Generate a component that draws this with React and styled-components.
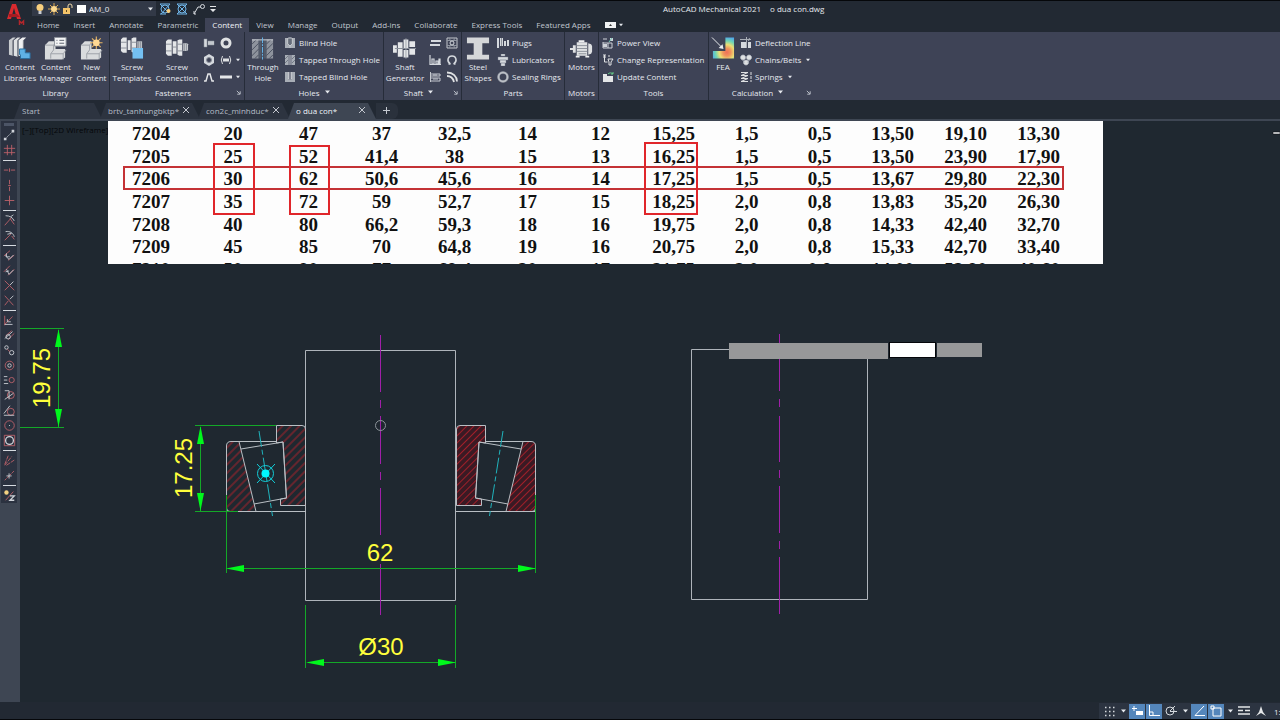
import React, { useState } from "react";
import styled, { createGlobalStyle } from "styled-components";

const GlobalStyle = createGlobalStyle`
    * {
        box-sizing: border-box;
    }

    body {
        margin: 0;
        background: #1f2830;
    }

    button, input, select {
        margin: 0;
        padding: 0;
        border: 0;
        background: none;
        color: inherit;
        font: inherit;
    }

    svg {
        display: block;
        flex: none;
    }
`

const Page = styled.div`
    display: flex;
    flex-direction: column;
    min-height: 100vh;
    overflow: hidden;
    font-family: "Open Sans", "Noto Sans", sans-serif;
    font-size: 8px;
    line-height: 11px;
    color: #e6e9ef;
`

const Header = styled.header`
    display: flex;
    height: 32px;
    background: #222933;
    border-top: 1px solid #05070a;
`

const Logo = styled.div`
    width: 32px;
    padding: 2px 0 0 6px;
`

const HeaderRows = styled.div`
    flex: 1;
    min-width: 0;
`

const TitleRow = styled.div`
    display: flex;
    align-items: center;
    height: 17px;
    padding-bottom: 2px;
`

const LayerBox = styled.label`
    display: flex;
    align-items: center;
    gap: 2px;
    width: 124px;
    height: 15px;
    padding: 0 3px 0 2px;
    background: #323947;

    select {
        flex: 1;
        min-width: 0;
        padding-left: 1px;
        appearance: none;
    }
`

const QuickTools = styled.div`
    display: flex;
    align-items: center;
    gap: 5px;
    width: 507px;
    padding-left: 3px;
`

const Title = styled.div`
    display: flex;
    gap: 9px;
    white-space: pre;
`

const TabRow = styled.nav`
    display: flex;
    height: 14px;
    margin-left: -2px;
`

const Tab = styled.button`
    padding: 0 7px 2px;
    color: ${props => props.$active ? "#f0f3f8" : "#c0c6cf"};
    background: ${props => props.$active ? "#3e4356" : "transparent"};
    white-space: nowrap;
`

const TabToggle = styled.button`
    display: flex;
    align-items: center;
    gap: 3px;
    padding: 0 0 1px 7px;
`

const Ribbon = styled.div`
    display: flex;
    height: 68px;
    padding-left: 2px;
    background: #3e4356;
`

const Panel = styled.section`
    display: flex;
    flex-direction: column;
    flex: none;
    width: ${props => props.$width}px;
    border-right: 1px solid ${props => props.$last ? "transparent" : "#262c39"};
`

const PanelBody = styled.div`
    display: flex;
    height: 54px;
    padding-top: 2px;
`

const PanelTitle = styled.div`
    display: flex;
    align-items: center;
    height: 14px;
    padding-bottom: 2px;

    h2 {
        display: flex;
        align-items: center;
        justify-content: center;
        gap: 5px;
        flex: 1;
        margin: 0;
        font-size: 8px;
        font-weight: 400;
    }

    button {
        width: 8px;
    }
`

const BigButton = styled.button`
    display: flex;
    flex-direction: column;
    align-items: center;
    flex: none;
    width: ${props => props.$width}px;
    height: 50px;
    padding-top: 2px;
    white-space: nowrap;
`

const ButtonList = styled.div`
    display: flex;
    flex-direction: column;
    padding-left: 3px;
`

const ListButton = styled.button`
    display: flex;
    align-items: center;
    gap: 3px;
    height: 17px;
    white-space: nowrap;

    span + svg {
        margin-left: 2px;
    }
`

const IconGrid = styled.div`
    display: grid;
    grid-template-columns: 17px 17px ${props => props.$menus ? "8px" : ""};
    grid-auto-rows: 17px;

    button {
        display: flex;
        align-items: center;
        justify-content: center;
    }
`

const FileTabs = styled.nav`
    display: flex;
    align-items: flex-end;
    height: 21px;
    padding-left: 14px;
    background: #222933;
    border-bottom: 2px solid #3e4653;
`

const FileTab = styled.div`
    display: flex;
    align-items: center;
    justify-content: space-between;
    width: ${props => props.$width}px;
    height: 16px;
    margin-right: -2px;
    padding: 0 11px 2px 8px;
    clip-path: polygon(0 100%, 6px 0, calc(100% - 8px) 0, 100% 100%);
    background: ${props => props.$active ? "#3e4653" : "#2d3440"};
    color: ${props => props.$active ? "#f0f3f8" : "#b6bcc6"};
`

const AddTab = styled.button`
    width: 22px;
    height: 16px;
    padding: 0 0 2px 7px;
    margin-left: 2px;
    background: #2a313c;
    border-radius: 0 6px 6px 0;
`

const Workspace = styled.div`
    display: flex;
    flex: 1;
`

const SideBar = styled.aside`
    width: 20px;
    flex: none;
    background: #3e4653;
`

const SnapBar = styled.div`
    display: flex;
    flex-direction: column;
    align-items: center;
    width: 16px;
    margin-left: 1px;
    padding: 2px 0 0;
    background: #2b3240;

    button {
        display: flex;
        align-items: center;
        justify-content: center;
        width: 16px;
        height: 15px;
    }
`

const Grip = styled.div`
    width: 10px;
    height: 3px;
    margin-bottom: 2px;
    background: #4c5566;
`

const Divider = styled.div`
    width: 13px;
    height: 1px;
    margin: 2px 0;
    background: #d5dae0;
`

const Canvas = styled.main`
    position: relative;
    flex: 1;
    min-width: 0;
    background: #1f2830;
`

const ViewLabel = styled.div`
    position: absolute;
    top: 3px;
    left: 2px;
    color: #05070a;
    white-space: nowrap;
`

const Scan = styled.div`
    position: relative;
    width: 995px;
    height: 143px;
    margin-left: 88px;
    padding-top: 2px;
    background: #fdfdfd;
    overflow: hidden;
`

const BearingTable = styled.table`
    table-layout: fixed;
    width: 967px;
    height: 158px;
    border-collapse: collapse;
    font-family: "Liberation Serif", serif;
    font-size: 19px;
    line-height: 20px;
    font-weight: 700;
    color: #111;

    td {
        width: 73px;
        padding: 0;
        text-align: center;
    }
    td:nth-child(1) {
        width: 86px;
    }
    td:nth-child(2) {
        width: 78px;
    }
`

const Drawing = styled.svg`
    position: absolute;
    inset: 0;
    width: 100%;
    height: 100%;
    font-family: "Liberation Sans", sans-serif;
    font-size: 24px;
`

const DynamicInput = styled.div`
    position: absolute;
    top: 221px;
    left: 709px;
    display: flex;
    gap: 1px;
`

const Prompt = styled.div`
    width: 159px;
    height: 16px;
    margin-top: 1px;
    background: #979899;
`

const ValueBox = styled.input`
    width: ${props => props.$active ? 47 : 45}px;
    height: ${props => props.$active ? 16 : 14}px;
    margin-top: ${props => props.$active ? 0 : 1}px;
    border: ${props => props.$active ? "1px solid #05070a" : "0"};
    background: ${props => props.$active ? "#fff" : "#979899"};
    outline: 0;
`

const StatusBar = styled.footer`
    display: flex;
    justify-content: flex-end;
    height: 18px;
    background: #222933;
    border-bottom: 1px solid #05070a;
`

const StatusTools = styled.div`
    display: flex;
    align-items: center;
    gap: 1px;
    width: 181px;
    margin-top: 1px;
    padding-left: 2px;
    background: #2c3441;
    overflow: hidden;
    white-space: nowrap;

    span {
        padding-left: 4px;
    }
`

const StatusButton = styled.button`
    display: flex;
    align-items: center;
    justify-content: center;
    flex: none;
    width: ${props => props.$narrow ? 10 : 16}px;
    height: 15px;
    background: ${props => props.$on ? "#5486bb" : "transparent"};
`

const Down = ({ size = 5 }) => (
    <svg width={size} height="4" viewBox="0 0 5 4"><path d="M0 .5h5L2.5 3.5z" fill="#e6e9ee" /></svg>
)

const Launcher = () => (
    <svg width="5" height="5" viewBox="0 0 6 6" fill="none" stroke="#cfd4dc"><path d="M1 1l3.5 3.5M5 1.5V5H1.5" /></svg>
)

// 24px ribbon icons
const big = {
    libraries: <>
        <path d="M1 4l4-3 3 0-3 3v16l-4-1z" fill="#c9ccd0" />
        <path d="M6 4l4-3 3 0-3 3v17l-4-1z" fill="#dfe1e3" />
        <path d="M11 4l4-3 4 0-3 3v17l-5-1z" fill="#f0f1f2" />
        <path d="M5 4v16M10 4v17M16 4v10" stroke="#7d828b" />
        <path d="M12 13h6v4h5v6H13v-4h-1z" fill="#5fb2e6" stroke="#2c6f9f" />
    </>,
    manager: <>
        <path d="M1 9l4-4h7v8h10v9l-3 2H1z" fill="#d9dbdd" />
        <path d="M1 9h9l3-4M10 9v5l-3 4h13v6M7 18v5M20 18l3-4" stroke="#9da1a8" fill="none" />
        <path d="M11 1h12v9H11z" fill="#f4f5f6" stroke="#8d929b" />
        <path d="M13 4h1M16 4h5M13 7h1M16 7h5" stroke="#555c68" />
    </>,
    newContent: <>
        <path d="M1 9l4-4h7v8h10v9l-3 2H1z" fill="#d9dbdd" />
        <path d="M1 9h9l3-4M10 9v5l-3 4h13v6M7 18v5M20 18l3-4" stroke="#9da1a8" fill="none" />
        <path d="M17 0v13M10.500 6.500h13M12.500 2l9 9M21.500 2l-9 9" stroke="#e6b566" strokeWidth="1.200" />
        <circle cx="17" cy="6.500" r="3.500" fill="#ffd894" />
    </>,
    templates: <>
        <path d="M1 3l2-2h4v16H3l-2-2zM8 4h3v10H8zM12 2l2-1h3v16h-3l-2-1z" fill="#e4e6e8" />
        <path d="M18 5h5v8h-5z" fill="#c2c6cc" />
        <path d="M1 6h6M1 12h6M12 6h5M12 12h5M19.500 5v8M21.500 5v8" stroke="#8b909a" />
        <path d="M13 12h11v11H13z" fill="#74c0f2" />
    </>,
    connection: <>
        <path d="M1 5l2-2h4v17H3l-2-2zM8 5h4v13H8zM13 4l2-1h3v17h-3l-2-1z" fill="#e4e6e8" />
        <path d="M19 7h4l1 1v6l-1 1h-4z" fill="#d0d3d8" />
        <path d="M1 8h6M1 15h6M13 8h5M13 15h5M8 11h4M20.500 7v8M22.500 7v8" stroke="#8b909a" />
    </>,
    hole: <>
        <path d="M1 3h7v20H1zM16 3h7v20h-7z" fill="#8e939d" />
        <path d="M1 8l5-5M1 14l7-7M1 20l7-7M4 23l4-4M16 8l5-5M16 14l7-7M16 20l7-7M19 23l4-4" stroke="#4a5060" />
        <path d="M8 3h3v20H8zM13 3h3v20h-3z" fill="#525a69" />
        <path d="M1 3.500h22" stroke="#d0d4da" />
        <path d="M12 1v23" stroke="#67b8ec" strokeDasharray="6 1 2 1" />
    </>,
    shaft: <>
        <path d="M0 9h4v8H0zM5 6h5v6H5zM5 13h5v8H5zM11 3h5v9h-5zM11 14h5v8h-5zM17 5h6v6h-6zM17 13h6v6h-6z" fill="#e4e6e8" />
        <path d="M2 12.500h22" stroke="#8b909a" />
        <path d="M13.500 2v21" stroke="#a3a8b0" />
    </>,
    beam: <path d="M1 1h23v6h-7v12h7v5H1v-5h7V7H1z" fill="#d5d7d9" />,
    motor: <>
        <path d="M0 12h3v2H0zM3 9h3v8H3zM7 6h11v14H7zM19 7l3 1 1 2v6l-1 2-3 1z" fill="#dfe1e3" />
        <path d="M9 4h6v2H9zM6 20h4v2H6zM16 20h4v2h-4z" fill="#f0f1f2" />
        <path d="M7 9.500h11M7 12.500h11M7 15.500h11M9 18h8" stroke="#8b909a" />
    </>,
    fea: <>
        <defs>
            <radialGradient id="heat" cx=".66" cy=".7" r=".72">
                <stop offset="0" stopColor="#ef6f58" />
                <stop offset=".25" stopColor="#f0935c" />
                <stop offset=".5" stopColor="#ecdf75" />
                <stop offset=".75" stopColor="#6fd6b4" />
                <stop offset="1" stopColor="#52a8ea" />
            </radialGradient>
        </defs>
        <path d="M15 1h9v22H2v-8h13z" fill="url(#heat)" />
        <path d="M1 1l11 11" stroke="#eef0f2" fill="none" />
        <path d="M13 13l-5-1 4-4z" fill="#eef0f2" />
    </>,
}

// 12px ribbon icons
const small = {
    screw: <path d="M1 2h3v8H1zM5 4h6v4H5zM7 4v4M9 4v4" fill="#d5d9de" stroke="#8b909a" strokeWidth=".5" />,
    washer: <circle cx="6" cy="6" r="4" fill="none" stroke="#dfe1e3" strokeWidth="3" />,
    nut: <><path d="M6 0l5 3v6l-5 3-5-3V3z" fill="#d5d9de" /><circle cx="6" cy="6" r="2.500" fill="#3e4356" stroke="#8b909a" /></>,
    pin: <><path d="M2.500 2Q0 6 2.500 10M9.500 2Q12 6 9.500 10" stroke="#dfe1e3" fill="none" /><path d="M3 4.500h6v3H3z" fill="#dfe1e3" /></>,
    clip: <path d="M1 10h2l2-7h2l2 7h2" fill="none" stroke="#e4e6e8" strokeWidth="1.500" />,
    rod: <path d="M0 4.500h12v3H0z" fill="#e4e6e8" />,
    blind: <><path d="M1 1h10v10H1z" fill="#a9aeb6" /><path d="M4 1h4v6L6 9 4 7z" fill="#3b4252" stroke="#e4e6e8" strokeWidth=".7" /><path d="M6 0v11" stroke="#cfd4dc" strokeWidth=".6" /></>,
    tapped: <><path d="M1 1h3v10H1zM8 1h3v10H8z" fill="#a9aeb6" /><path d="M5 1v10M7 1v10" stroke="#d6dadf" /><path d="M1 5l3-3M1 9l3-3M8 5l3-3M8 9l3-3" stroke="#5a6170" strokeWidth=".7" /></>,
    tappedBlind: <><path d="M1 1h3v7l2 1 2-1V1h3v10H1z" fill="#a9aeb6" /><path d="M4.500 1v7h3V1M6 1v6" stroke="#e4e6e8" strokeWidth=".8" fill="none" /></>,
    key: <path d="M2 3h10v2H2zM1 7h10v2H1z" fill="#d5d9de" />,
    bearing: <><path d="M1 1h10v10H1z" fill="none" stroke="#c2c6cc" /><path d="M1 3.500h10M1 8.500h10M3 1l6 10M9 1L3 11" stroke="#8f95a0" /><circle cx="6" cy="6" r="2" fill="#3e4356" stroke="#d5d9de" /></>,
    seal: <path d="M1 1v9.500h11M3 5h2v5H3zM7 7h2v3H7zM10 5h1v5h-1z" fill="none" stroke="#d5d9de" strokeWidth="1.200" />,
    ring: <path d="M4.500 10H2.500M7.500 10h2M4.500 10C0 7 2 2 6 2S12 7 7.500 10" fill="none" stroke="#d5d9de" strokeWidth="1.500" />,
    break: <path d="M1.500 1v10M1 3h10v2H1M1 7h10v3H1M4 4h4M4 8h5" fill="none" stroke="#c5c9d0" />,
    center: <path d="M1 1.500c6 0 10 4 10 9M1 5c4 0 6 2 7 6" fill="none" stroke="#dfe1e3" strokeWidth="1.800" />,
    plug: <><path d="M0 1h2v10H0zM3 1h3v8H3zM7 4h2v5H7zM10 3h2v6h-2z" fill="#d5d9de" /><path d="M4.500 1v8" stroke="#8b909a" /></>,
    lubricator: <path d="M4 0h4v2H4zM1 3h10v3H1zM3 6h6v3H3zM4 9h4v3H4z" fill="#d5d9de" stroke="#7c828e" strokeWidth=".4" />,
    sealing: <><circle cx="6" cy="6" r="4.500" fill="none" stroke="#a4a9b2" strokeWidth="2.500" /><circle cx="6" cy="6" r="4.500" fill="none" stroke="#dfe1e3" strokeWidth=".5" /></>,
    power: <><path d="M1 2h4M1 5v6h9V6H1M6 6v5" fill="none" stroke="#cfd3d9" /><path d="M1 7h4v3H1zM8 1h3v3H8z" fill="#cfd3d9" /><path d="M7 5l3-4" stroke="#70c8b4" /></>,
    change: <path d="M1 1h3M2.500 1v7h3M6 5h5l-2 3v3H7V8zM1 3h3M6 2h2" fill="none" stroke="#dfe1e3" />,
    update: <><path d="M1 3h4v2h6v6H1z" fill="#e4e6e8" /><path d="M6 3a3 2.500 0 0 1 5 0M11 1v2H9" fill="none" stroke="#63c887" /></>,
    deflection: <><path d="M1 5h5v6H1zM8 5h3v6H8z" fill="#d5d9de" /><path d="M0 2.500h11M6.500 0v11M9.500 1l-1 3" stroke="#a9aeb6" /></>,
    chain: <path d="M3 1a2.500 2.500 0 1 0 .1 0zM9 1a2.500 2.500 0 1 0 .1 0zM6 6a2.500 2.500 0 1 0 .1 0zM2 5l3 4M10 5L7 9" fill="#dfe1e3" stroke="#b8bdc5" strokeWidth=".7" />,
    spring: <path d="M1 1.500h7L1 4.500h7L1 7.500h7L1 10.500h7M11 1v3M11 5v3M11 9v2" fill="none" stroke="#dfe1e3" />,
}

const Big = ({ name }) => <svg width="24" height="25" viewBox="0 0 25 25">{big[name]}</svg>
const Small = ({ name }) => <svg width="12" height="12" viewBox="0 0 12 12">{small[name]}</svg>

const r = "#c0636b"
const w = "#cfd3d9"

// one row per object snap, null is a divider
const snaps = [
    ["Temporary track point", <><path d="M2 12L12 2" stroke={w} strokeDasharray="2 1" /><path d="M1 10h3v3H1zM10 1h3v3h-3z" fill={w} /></>],
    ["Snap from", <path d="M5 1v12M10 1v12M1 5h13M1 10h13" stroke={r} />],
    null,
    ["Horizontal", <path d="M1 7h5M9 7h5M7.500 5v4" stroke={r} />],
    ["Vertical", <path d="M7.500 1v5M7.500 9v5M6 7.500h3" stroke={r} />],
    ["Cross", <path d="M7.500 2v11M2 7.500h11" stroke={r} />],
    null,
    ["Arc radial", <><path d="M2 13L10 4M8 5l5 7" stroke={r} /><path d="M3 2c5 0 8 2 10 6M9 3l3-2" stroke={w} /></>],
    ["Arc tangent", <><path d="M2 13L9 6M10 8l3 4" stroke={r} /><path d="M3 3c5-1 9 2 10 6M5 6l5-1" stroke={w} /></>],
    null,
    ["Symmetry", <><path d="M1 8l7-6M6 13l7-6" stroke={r} /><path d="M2 7l5 5 5-5M4 5v4h4" stroke={w} /></>],
    ["Reference", <><path d="M1 9l7-7M6 13l7-7" stroke={r} /><path d="M4 6l3 6 5-5M3 9l4-1" stroke={w} /></>],
    ["Intersection", <><path d="M2 2l11 11M2 13l5-5" stroke={r} /><path d="M8 7l4-4" stroke={w} /></>],
    ["Virtual intersection", <><path d="M2 2l10 11M2 13l4-5" stroke={r} /><path d="M8 6l4-4" stroke={w} /></>],
    null,
    ["Perpendicular", <><path d="M2 13V2M2 12l9-9" stroke={r} /><path d="M2 12h9M5 6v3h4" stroke={w} /></>],
    ["Parallel", <><path d="M3 8l7-6M6 12l7-7" stroke={r} /><path d="M2 11l9-8" stroke={w} /><circle cx="6" cy="9" r="2.500" stroke={w} /></>],
    ["Center of two", <><circle cx="4" cy="4" r="2" stroke={w} /><circle cx="10" cy="10" r="2.500" stroke={w} /><path d="M5 6l3 3" stroke={r} /></>],
    ["Center", <><circle cx="7.500" cy="7.500" r="5" stroke={r} /><circle cx="7.500" cy="7.500" r="2" stroke={w} /></>],
    ["Relative", <><path d="M1 3h4M1 7h4M1 11h5" stroke={w} /><circle cx="10" cy="7" r="3" stroke={r} /></>],
    ["Quadrant", <><circle cx="9" cy="7" r="4" stroke={r} /><path d="M2 2h5v10M2 12L12 5" stroke={w} /></>],
    ["Tangent", <><circle cx="9" cy="9" r="4" stroke={r} /><path d="M1 11L8 2M1 13h12" stroke={w} /></>],
    ["Circle center", <><circle cx="7.500" cy="7.500" r="5.500" stroke={r} /><path d="M7 7h1v1H7z" fill={w} /></>],
    ["Bounding circle", <><path d="M1.500 1.500h12v12h-12z" stroke={r} /><circle cx="7.500" cy="7.500" r="4.500" stroke={w} strokeWidth="1.500" /></>],
    null,
    ["Nearest", <path d="M2 13L10 3M4 13l9-6M2 12l4-10" stroke={r} strokeDasharray="5 1" />],
    ["Node", <><path d="M2 13L13 2" stroke={r} strokeDasharray="3 1" /><path d="M4 8h6M7 5v6" stroke={w} /></>],
    null,
    ["Z filter", <><circle cx="4" cy="4" r="2.500" fill="#f3d182" /><path d="M3 13l9-10" stroke={r} /><path d="M8 8h5l-5 5h5" stroke={w} strokeWidth="1.500" /></>],
]

const ribbonTabs = ["Home", "Insert", "Annotate", "Parametric", "Content", "View", "Manage", "Output", "Add-ins", "Collaborate", "Express Tools", "Featured Apps"]

const files = [
    { name: "Start", width: 88 },
    { name: "brtv_tanhungbktp*", width: 100, close: true },
    { name: "con2c_minhduc*", width: 92, close: true },
    { name: "o dua con*", width: 88, close: true },
]

const bearings = [
    ["7204", "20", "47", "37", "32,5", "14", "12", "15,25", "1,5", "0,5", "13,50", "19,10", "13,30"],
    ["7205", "25", "52", "41,4", "38", "15", "13", "16,25", "1,5", "0,5", "13,50", "23,90", "17,90"],
    ["7206", "30", "62", "50,6", "45,6", "16", "14", "17,25", "1,5", "0,5", "13,67", "29,80", "22,30"],
    ["7207", "35", "72", "59", "52,7", "17", "15", "18,25", "2,0", "0,8", "13,83", "35,20", "26,30"],
    ["7208", "40", "80", "66,2", "59,3", "18", "16", "19,75", "2,0", "0,8", "14,33", "42,40", "32,70"],
    ["7209", "45", "85", "70", "64,8", "19", "16", "20,75", "2,0", "0,8", "15,33", "42,70", "33,40"],
    ["7210", "50", "90", "77", "69,4", "20", "17", "21,75", "2,0", "0,8", "14,00", "52,90", "40,60"],
]

const BigTool = ({ icon, lines, width }) => (
    <BigButton $width={width}>
        <Big name={icon} />
        <span>{lines[0]}{lines[1] && <><br />{lines[1]}</>}</span>
    </BigButton>
)

const ListTool = ({ icon, label, menu }) => (
    <ListButton>
        <Small name={icon} />
        <span>{label}</span>
        {menu && <Down size={4} />}
    </ListButton>
)

const RibbonPanel = ({ title, width, menu, launcher, last, children }) => (
    <Panel $width={width} $last={last}>
        <PanelBody>{children}</PanelBody>
        <PanelTitle>
            <h2>{title}{menu && <Down />}</h2>
            {launcher && <button aria-label={title + " settings"}><Launcher /></button>}
        </PanelTitle>
    </Panel>
)

const IconTool = ({ icon }) => <button aria-label={icon}><Small name={icon} /></button>

// half section of the taper roller bearing, drawn for the left side
const Bearing = ({ hatch }) => (
    <g fill="none" stroke="#b9bfc4">
        <path d="M239 441.500H231Q226.500 441.500 226.500 446V508Q226.500 511.500 230 511.500H256z" fill={`url(#${hatch})`} />
        <path d="M276.500 443V425.500H302Q305.500 425.500 305.500 429V505.500H280.500V499L286.500 498L283 442z" fill={`url(#${hatch})`} />
        <path d="M239 441.500H276M241 449L283 442L286.500 498L254 504M226 511.500H306" />
        <path d="M259 431L272.500 516" stroke="#1fb4bd" strokeDasharray="16 3 5 3" />
    </g>
)

const Arrow = ({ x, y, turn }) => <path d="M0 0L18 -3.500V3.500z" fill="#00f81c" transform={`translate(${x} ${y}) rotate(${turn})`} />

const Sheet = () => (
    <Drawing>
        <defs>
            <pattern id="hatchLeft" width="6" height="6" patternUnits="userSpaceOnUse" patternTransform="rotate(45)">
                <path d="M3 0V6" stroke="#ab222b" />
            </pattern>
            <pattern id="hatchRight" width="5" height="5" patternUnits="userSpaceOnUse" patternTransform="rotate(-45)">
                <path d="M0 0H5V5H0z" fill="#3a1a24" />
                <path d="M2.500 0V5" stroke="#a01f29" />
            </pattern>
        </defs>
        <g transform="translate(-20 -121)">
            <g fill="none" stroke="#c43235" strokeWidth="2">
                <path d="M124 167H1063V189H124z" />
                <g stroke="#e0262b">
                    <path d="M214 144H254V214H214zM290 146H329V214H290zM645 143H697V214H645z" />
                </g>
            </g>
            <g fill="none" stroke="#aeb4ba">
                <path d="M305.500 350.500H455.500V600.500H305.500z" />
                <path d="M691.500 349.500H867.500V599.500H691.500z" />
            </g>
            <g stroke="#a01fa9">
                <path d="M380.500 335V392M380.500 400V408M380.500 416V464M380.500 472V480M380.500 488V535M380.500 564V615" />
                <path d="M779.500 334V391M779.500 399V407M779.500 416V462M779.500 470V478M779.500 486V533M779.500 541V549M779.500 557V614" />
            </g>
            <Bearing hatch="hatchLeft" />
            <g transform="translate(762 0) scale(-1 1)">
                <Bearing hatch="hatchRight" />
            </g>
            <circle cx="380.500" cy="425.500" r="5" fill="none" stroke="#8d949a" />
            <g stroke="#12cdd8" fill="none">
                <circle cx="265.500" cy="473.500" r="8" />
                <path d="M257 464L275 483M275 464L257 483" />
                <circle cx="265.500" cy="473.500" r="4" fill="#00f6ff" stroke="none" />
            </g>
            <g stroke="#14a828">
                <path d="M20 328.500H64M20 427.500H64M58.500 330V427" />
                <path d="M195 425.500H276M195 511.500H238M200.500 427V511" />
                <path d="M226.500 495V573M535.500 495V573M228 568.500H535" />
                <path d="M305.500 605V668M455.500 605V668M308 662.500H455" />
            </g>
            <Arrow x={58.5} y={329} turn={90} />
            <Arrow x={58.5} y={427} turn={-90} />
            <Arrow x={200.5} y={426} turn={90} />
            <Arrow x={200.5} y={511} turn={-90} />
            <Arrow x={226} y={568.5} turn={0} />
            <Arrow x={536} y={568.5} turn={180} />
            <Arrow x={306} y={662.5} turn={0} />
            <Arrow x={456} y={662.5} turn={180} />
            <g fill="#ffff3c" textAnchor="middle">
                <text transform="translate(50 378) rotate(-90)">19.75</text>
                <text transform="translate(192 468) rotate(-90)">17.25</text>
                <text x="380" y="561">62</text>
                <text x="381" y="655">Ø30</text>
            </g>
            <path d="M1273 132h7v2h-7z" fill="#f0f2f4" stroke="#05070a" strokeWidth=".5" />
        </g>
    </Drawing>
)

const App = () => {
    const [tab, setTab] = useState("Content")
    const [length, setLength] = useState("")
    const [angle, setAngle] = useState("")

    return (
        <Page>
            <GlobalStyle />
            <Header>
                <Logo>
                    <svg width="20" height="23" viewBox="0 0 20 23" fill="none">
                        <path d="M1 16L6 1h4l5 15h-4L8 5 5 16z" fill="#d92a2e" />
                        <path d="M3 11h8l3 3H3z" fill="#a61c22" />
                        <path d="M13.500 22v-4l2 2 2-2v4" stroke="#b3262b" strokeWidth="1.500" />
                    </svg>
                </Logo>
                <HeaderRows>
                    <TitleRow>
                        <LayerBox>
                            <svg width="12" height="12" viewBox="0 0 12 12"><circle cx="6" cy="4.500" r="3.500" fill="#f8cf7e" /><path d="M4.500 8h3v3h-3z" fill="#c9ccd2" /></svg>
                            <svg width="12" height="12" viewBox="0 0 12 12"><path d="M6 0v12M0 6h12M2 2l8 8M10 2l-8 8" stroke="#dba852" /><circle cx="6" cy="6" r="3" fill="#fbd88f" /></svg>
                            <svg width="12" height="12" viewBox="0 0 12 12"><path d="M1 5h7v6H1z" fill="#f5c469" /><path d="M6 5V3q0-2 2-2t2 2v2" fill="none" stroke="#f0d9a8" /><path d="M4 7h1v2H4z" fill="#604a20" /></svg>
                            <svg width="10" height="10" viewBox="0 0 10 10"><path d="M1 1h9v8H1z" fill="#fff" /></svg>
                            <select aria-label="Layer"><option>AM_0</option></select>
                            <Down />
                        </LayerBox>
                        <QuickTools>
                            <svg width="12" height="12" viewBox="0 0 12 12" fill="none" stroke="#6fb5e8"><path d="M1 1h10M1 11h6M1 1l9 9M11 1L2 11" /><circle cx="6" cy="6" r="4" /><circle cx="9.500" cy="8" r="2" fill="#f8cf7e" stroke="none" /></svg>
                            <svg width="12" height="12" viewBox="0 0 12 12" fill="none" stroke="#6fb5e8"><path d="M1 1h10M1 11h10M1 1l10 10M11 1L1 11" /><circle cx="6" cy="6" r="4" /></svg>
                            <svg width="12" height="12" viewBox="0 0 12 12" fill="none" stroke="#d5d9de"><path d="M1 11l4-7h3M1 8v3h2" /><circle cx="9.500" cy="3.500" r="2" /></svg>
                            <svg width="6" height="8" viewBox="0 0 6 8"><path d="M0 1h6v1H0zM0 4h6L3 7z" fill="#e4e6e8" /></svg>
                        </QuickTools>
                        <Title><span>AutoCAD Mechanical 2021</span><span>o dua con.dwg</span></Title>
                    </TitleRow>
                    <TabRow>
                        {ribbonTabs.map(name => (
                            <Tab key={name} $active={tab === name} onClick={() => setTab(name)}>{name}</Tab>
                        ))}
                        <TabToggle aria-label="Minimize ribbon">
                            <svg width="11" height="6" viewBox="0 0 11 6"><path d="M0 0h11v6H0z" fill="#f0f2f4" /><path d="M4 4h3L5.500 2z" fill="#333" /></svg>
                            <Down size={4} />
                        </TabToggle>
                    </TabRow>
                </HeaderRows>
            </Header>
            <Ribbon>
                <RibbonPanel title="Library" width={108}>
                    <BigTool icon="libraries" lines={["Content", "Libraries"]} width={36} />
                    <BigTool icon="manager" lines={["Content", "Manager"]} width={36} />
                    <BigTool icon="newContent" lines={["New", "Content"]} width={35} />
                </RibbonPanel>
                <RibbonPanel title="Fasteners" width={135} launcher>
                    <BigTool icon="templates" lines={["Screw", "Templates"]} width={44} />
                    <BigTool icon="connection" lines={["Screw", "Connection"]} width={46} />
                    <IconGrid $menus>
                        <IconTool icon="screw" />
                        <IconTool icon="washer" />
                        <span />
                        <IconTool icon="nut" />
                        <IconTool icon="pin" />
                        <button aria-label="More pins"><Down size={4} /></button>
                        <IconTool icon="clip" />
                        <IconTool icon="rod" />
                        <button aria-label="More rods"><Down size={4} /></button>
                    </IconGrid>
                </RibbonPanel>
                <RibbonPanel title="Holes" width={139} menu>
                    <BigTool icon="hole" lines={["Through", "Hole"]} width={36} />
                    <ButtonList>
                        <ListTool icon="blind" label="Blind Hole" />
                        <ListTool icon="tapped" label="Tapped Through Hole" />
                        <ListTool icon="tappedBlind" label="Tapped Blind Hole" />
                    </ButtonList>
                </RibbonPanel>
                <RibbonPanel title="Shaft" width={78} menu launcher>
                    <BigTool icon="shaft" lines={["Shaft", "Generator"]} width={42} />
                    <IconGrid>
                        <IconTool icon="key" />
                        <IconTool icon="bearing" />
                        <IconTool icon="seal" />
                        <IconTool icon="ring" />
                        <IconTool icon="break" />
                        <IconTool icon="center" />
                    </IconGrid>
                </RibbonPanel>
                <RibbonPanel title="Parts" width={103}>
                    <BigTool icon="beam" lines={["Steel", "Shapes"]} width={32} />
                    <ButtonList>
                        <ListTool icon="plug" label="Plugs" />
                        <ListTool icon="lubricator" label="Lubricators" />
                        <ListTool icon="sealing" label="Sealing Rings" />
                    </ButtonList>
                </RibbonPanel>
                <RibbonPanel title="Motors" width={34}>
                    <BigTool icon="motor" lines={["Motors"]} width={33} />
                </RibbonPanel>
                <RibbonPanel title="Tools" width={110}>
                    <ButtonList>
                        <ListTool icon="power" label="Power View" />
                        <ListTool icon="change" label="Change Representation" />
                        <ListTool icon="update" label="Update Content" />
                    </ButtonList>
                </RibbonPanel>
                <RibbonPanel title="Calculation" width={106} menu launcher last>
                    <BigTool icon="fea" lines={["FEA"]} width={28} />
                    <ButtonList>
                        <ListTool icon="deflection" label="Deflection Line" />
                        <ListTool icon="chain" label="Chains/Belts" menu />
                        <ListTool icon="spring" label="Springs" menu />
                    </ButtonList>
                </RibbonPanel>
            </Ribbon>
            <FileTabs>
                {files.map((file, i) => (
                    <FileTab key={file.name} $width={file.width} $active={i === 3}>
                        <span>{file.name}</span>
                        {file.close && (
                            <button aria-label={"Close " + file.name}>
                                <svg width="6" height="6" viewBox="0 0 6 6"><path d="M0 0l6 6M6 0L0 6" stroke="#c5c9d0" /></svg>
                            </button>
                        )}
                    </FileTab>
                ))}
                <AddTab aria-label="New drawing">
                    <svg width="7" height="7" viewBox="0 0 7 7"><path d="M3.500 0v7M0 3.500h7" stroke="#c5c9d0" /></svg>
                </AddTab>
            </FileTabs>
            <Workspace>
                <SideBar>
                    <SnapBar>
                        <Grip />
                        {snaps.map((snap, i) => snap
                            ? <button key={i} aria-label={snap[0]}><svg width="13" height="13" viewBox="0 0 15 15" fill="none">{snap[1]}</svg></button>
                            : <Divider key={i} />
                        )}
                    </SnapBar>
                </SideBar>
                <Canvas>
                    <ViewLabel>[−][Top][2D Wireframe]</ViewLabel>
                    <Scan>
                        <BearingTable>
                            <tbody>
                                {bearings.map(row => (
                                    <tr key={row[0]}>
                                        {row.map((cell, i) => <td key={i}>{cell}</td>)}
                                    </tr>
                                ))}
                            </tbody>
                        </BearingTable>
                    </Scan>
                    <Sheet />
                    <DynamicInput>
                        <Prompt />
                        <ValueBox $active aria-label="Length" value={length} onChange={e => setLength(e.target.value)} />
                        <ValueBox aria-label="Angle" value={angle} onChange={e => setAngle(e.target.value)} />
                    </DynamicInput>
                </Canvas>
            </Workspace>
            <StatusBar>
                <StatusTools>
                    <StatusButton aria-label="Grid"><svg width="11" height="11" viewBox="0 0 11 11"><path d="M1 1.500h10M1 5.500h10M1 9.500h10" stroke="#d5d9de" strokeDasharray="1.500 2.500" strokeWidth="1.500" /></svg></StatusButton>
                    <StatusButton $narrow aria-label="Snap options"><Down /></StatusButton>
                    <StatusButton $on aria-label="Dynamic input"><svg width="12" height="12" viewBox="0 0 12 12"><path d="M3 1v5M1 3.500h5" stroke="#fff" /><path d="M5 6h7v4H5z" fill="#fff" /></svg></StatusButton>
                    <StatusButton $on aria-label="Ortho"><svg width="12" height="12" viewBox="0 0 12 12" fill="none" stroke="#fff"><path d="M1.500 0v10.500H12M2 7h3v3" /></svg></StatusButton>
                    <StatusButton aria-label="Polar tracking"><svg width="12" height="12" viewBox="0 0 12 12" fill="none" stroke="#d5d9de"><circle cx="5" cy="6" r="4" /><path d="M5 6.500h7M5 6l5-5" /></svg></StatusButton>
                    <StatusButton $narrow aria-label="Polar options"><Down /></StatusButton>
                    <StatusButton $on aria-label="Object snap tracking"><svg width="12" height="12" viewBox="0 0 12 12" fill="none" stroke="#fff"><path d="M11 1L2 10.500h10" /></svg></StatusButton>
                    <StatusButton $on aria-label="Object snap"><svg width="12" height="12" viewBox="0 0 12 12" fill="none" stroke="#fff"><path d="M3 3h8v8H3zM1 1h3v3H1z" /></svg></StatusButton>
                    <StatusButton $narrow aria-label="Object snap options"><Down /></StatusButton>
                    <StatusButton aria-label="Lineweight"><svg width="12" height="10" viewBox="0 0 12 10"><path d="M0 1h5M7 1h5M0 4.500h5M7 4.500h5M0 8h5M7 8h5M5 1h2M5 8h2" stroke="#e4e6e8" strokeWidth="1.500" /></svg></StatusButton>
                    <StatusButton aria-label="Annotation scale"><svg width="10" height="11" viewBox="0 0 10 11"><path d="M5 0l2 6 3 4-5-3-5 3 3-4z" fill="#e4e6e8" /></svg></StatusButton>
                    <span>1:1</span>
                </StatusTools>
            </StatusBar>
        </Page>
    )
}

export default App
